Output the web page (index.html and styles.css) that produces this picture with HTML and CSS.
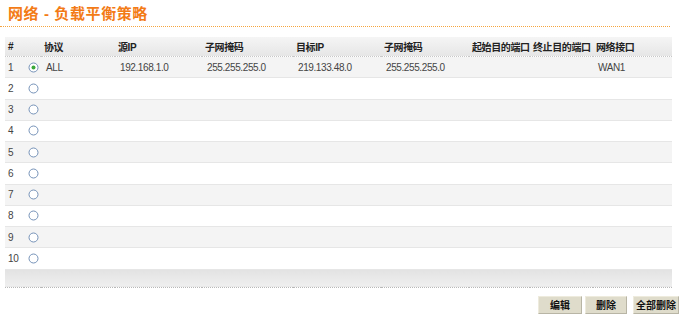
FILE: index.html
```html
<!DOCTYPE html>
<html lang="zh-CN">
<head>
  <meta charset="UTF-8">
  <title>网络 - 负载平衡策略</title>
  <link rel="stylesheet" href="styles.css">
</head>
<body>
  <div class="page">
    <h1 class="title">网络 - 负载平衡策略</h1>

    <table class="grid">
      <colgroup>
        <col style="width:19px"><col style="width:17px"><col style="width:74px">
        <col style="width:87px"><col style="width:91px"><col style="width:88px">
        <col style="width:88px"><col style="width:61px"><col style="width:63px">
        <col style="width:79px">
      </colgroup>
      <thead>
        <tr>
          <th>#</th><th></th><th>协议</th><th>源IP</th><th>子网掩码</th>
          <th>目标IP</th><th>子网掩码</th><th>起始目的端口</th><th>终止目的端口</th><th>网络接口</th>
        </tr>
      </thead>
      <tbody>
        <tr>
          <td>1</td>
          <td><svg class="radio" width="11" height="11" viewBox="0 0 11 11"><circle cx="5.5" cy="5.5" r="4.5" fill="#fff" stroke="#7592b8"/><circle cx="5.5" cy="5.5" r="2" fill="#3aa83a"/></svg></td>
          <td class="val">ALL</td><td class="val">192.168.1.0</td><td class="val">255.255.255.0</td>
          <td class="val">219.133.48.0</td><td class="val">255.255.255.0</td><td></td><td></td><td class="val">WAN1</td>
        </tr>
        <tr><td>2</td><td><svg class="radio" width="11" height="11" viewBox="0 0 11 11"><circle cx="5.5" cy="5.5" r="4.5" fill="#fff" stroke="#7592b8"/></svg></td><td></td><td></td><td></td><td></td><td></td><td></td><td></td><td></td></tr>
        <tr><td>3</td><td><svg class="radio" width="11" height="11" viewBox="0 0 11 11"><circle cx="5.5" cy="5.5" r="4.5" fill="#fff" stroke="#7592b8"/></svg></td><td></td><td></td><td></td><td></td><td></td><td></td><td></td><td></td></tr>
        <tr><td>4</td><td><svg class="radio" width="11" height="11" viewBox="0 0 11 11"><circle cx="5.5" cy="5.5" r="4.5" fill="#fff" stroke="#7592b8"/></svg></td><td></td><td></td><td></td><td></td><td></td><td></td><td></td><td></td></tr>
        <tr><td>5</td><td><svg class="radio" width="11" height="11" viewBox="0 0 11 11"><circle cx="5.5" cy="5.5" r="4.5" fill="#fff" stroke="#7592b8"/></svg></td><td></td><td></td><td></td><td></td><td></td><td></td><td></td><td></td></tr>
        <tr><td>6</td><td><svg class="radio" width="11" height="11" viewBox="0 0 11 11"><circle cx="5.5" cy="5.5" r="4.5" fill="#fff" stroke="#7592b8"/></svg></td><td></td><td></td><td></td><td></td><td></td><td></td><td></td><td></td></tr>
        <tr><td>7</td><td><svg class="radio" width="11" height="11" viewBox="0 0 11 11"><circle cx="5.5" cy="5.5" r="4.5" fill="#fff" stroke="#7592b8"/></svg></td><td></td><td></td><td></td><td></td><td></td><td></td><td></td><td></td></tr>
        <tr><td>8</td><td><svg class="radio" width="11" height="11" viewBox="0 0 11 11"><circle cx="5.5" cy="5.5" r="4.5" fill="#fff" stroke="#7592b8"/></svg></td><td></td><td></td><td></td><td></td><td></td><td></td><td></td><td></td></tr>
        <tr><td>9</td><td><svg class="radio" width="11" height="11" viewBox="0 0 11 11"><circle cx="5.5" cy="5.5" r="4.5" fill="#fff" stroke="#7592b8"/></svg></td><td></td><td></td><td></td><td></td><td></td><td></td><td></td><td></td></tr>
        <tr><td>10</td><td><svg class="radio" width="11" height="11" viewBox="0 0 11 11"><circle cx="5.5" cy="5.5" r="4.5" fill="#fff" stroke="#7592b8"/></svg></td><td></td><td></td><td></td><td></td><td></td><td></td><td></td><td></td></tr>
      </tbody>
      <tfoot>
        <tr><td colspan="10"></td></tr>
      </tfoot>
    </table>

    <div class="actions">
      <button class="btn-edit">编辑</button>
      <button class="btn-del">删除</button>
      <button class="btn-all">全部删除</button>
    </div>
  </div>
</body>
</html>
```

FILE: styles.css
```css
body, html {
  margin: 0;
  padding: 0;
  background: #fff;
  font-family: 'Liberation Sans', 'Noto Sans CJK SC', sans-serif;
}

.page {
  width: 679px;
  height: 318px;
  overflow: hidden;
}

.title {
  margin: 0 9px 0 0;
  padding: 5px 0 3px 8px;
  font-size: 15px;
  line-height: 18px;
  font-weight: bold;
  letter-spacing: 0.6px;
  color: #f37b16;
  border-bottom: 1px dotted #f5a540;
}

.grid {
  margin: 10px 0 0 5px;
  width: 667px;
  table-layout: fixed;
  border-collapse: collapse;
  font-size: 10px;
  color: #444;
}

.grid th {
  height: 19px;
  padding: 0 0 0 3px;
  text-align: left;
  font-size: 10px;
  font-weight: bold;
  letter-spacing: -0.4px;
  color: #222;
  background: linear-gradient(#f5f5f5, #e6e6e6);
  border-bottom: 1px dotted #c8c8c8;
  white-space: nowrap;
  overflow: hidden;
}

.grid td {
  height: 20.25px;
  padding: 0 0 0 3px;
  border-bottom: 1px solid #e6e6e6;
  white-space: nowrap;
  overflow: hidden;
  letter-spacing: -0.4px;
}

.grid td.val {
  padding-left: 5px;
}

.grid tbody tr:nth-child(odd) td {
  background: #f4f4f4;
}

.radio {
  display: block;
  margin-left: 1px;
}

.grid tfoot td {
  height: 17px;
  background: linear-gradient(#e2e2e2, #efefef);
  border-bottom: 1px dotted #b8b8b8;
}

.actions {
  display: flex;
  justify-content: flex-end;
  gap: 3px;
  margin-top: 8px;
  margin-right: 0;
}

.actions button {
  height: 18px;
  padding: 0;
  font-family: 'Noto Sans CJK SC', sans-serif;
  font-size: 10px;
  font-weight: bold;
  color: #111;
  background: #dfdccb;
  border: 1px solid #eeebdd;
  border-right-color: #b8b5a5;
  border-bottom-color: #b8b5a5;
}

.actions .btn-edit {
  width: 44px;
}

.actions .btn-del {
  width: 42px;
  margin-right: 3px;
}

.actions .btn-all {
  width: 46px;
}
```
